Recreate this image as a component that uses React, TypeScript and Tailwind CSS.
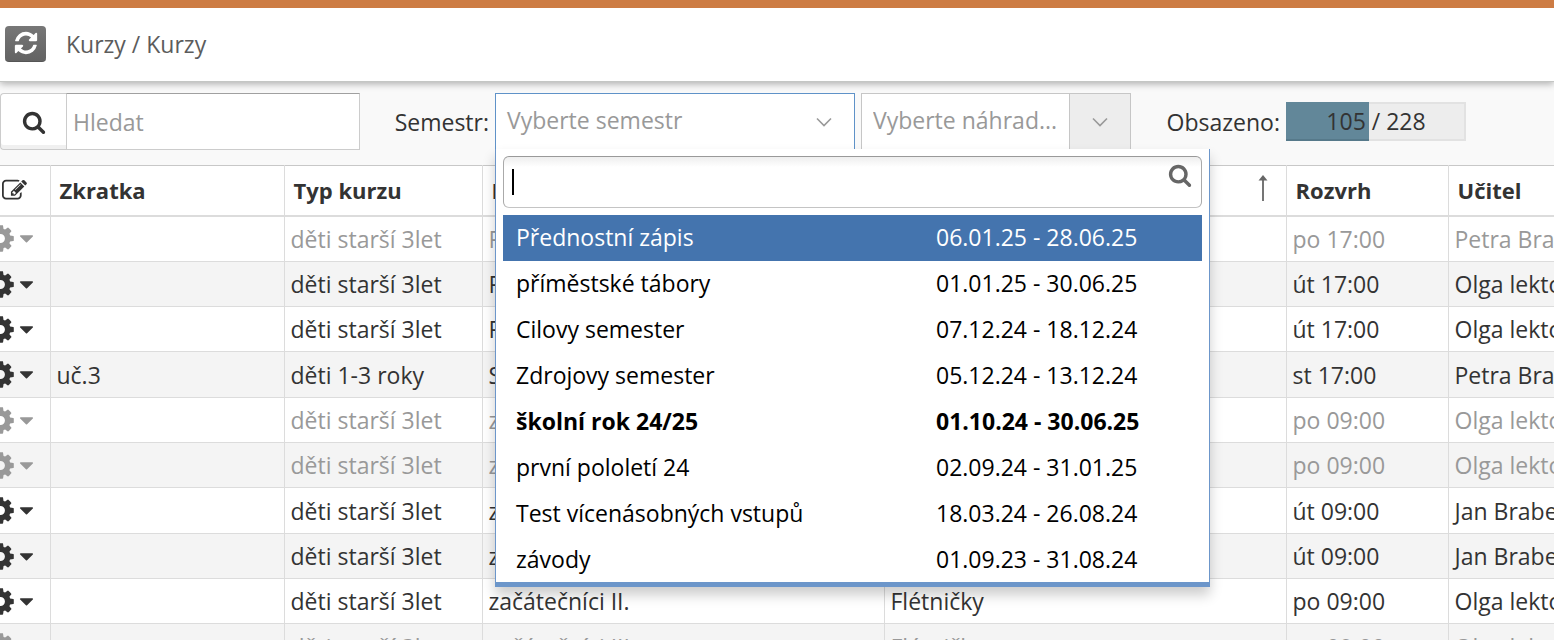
import { useState } from 'react'

type Course = {
    code?: string
    type: string
    name: string
    instrument?: string
    time: string
    teacher: string
    muted?: boolean
}

type Semester = {
    name: string
    range: string
    current?: boolean
}

const semesters: Semester[] = [
    { name: 'Přednostní zápis', range: '06.01.25 - 28.06.25' },
    { name: 'příměstské tábory', range: '01.01.25 - 30.06.25' },
    { name: 'Cilovy semester', range: '07.12.24 - 18.12.24' },
    { name: 'Zdrojovy semester', range: '05.12.24 - 13.12.24' },
    { name: 'školní rok 24/25', range: '01.10.24 - 30.06.25', current: true },
    { name: 'první pololetí 24', range: '02.09.24 - 31.01.25' },
    { name: 'Test vícenásobných vstupů', range: '18.03.24 - 26.08.24' },
    { name: 'závody', range: '01.09.23 - 31.08.24' },
]

const courses: Course[] = [
    { type: 'děti starší 3let', name: 'P', time: 'po 17:00', teacher: 'Petra Brabcová', muted: true },
    { type: 'děti starší 3let', name: 'P', time: 'út 17:00', teacher: 'Olga lektorka' },
    { type: 'děti starší 3let', name: 'P', time: 'út 17:00', teacher: 'Olga lektorka' },
    { code: 'uč.3', type: 'děti 1-3 roky', name: 'S', time: 'st 17:00', teacher: 'Petra Brabcová' },
    { type: 'děti starší 3let', name: 'z', time: 'po 09:00', teacher: 'Olga lektorka', muted: true },
    { type: 'děti starší 3let', name: 'z', time: 'po 09:00', teacher: 'Olga lektorka', muted: true },
    { type: 'děti starší 3let', name: 'z', time: 'út 09:00', teacher: 'Jan Brabec' },
    { type: 'děti starší 3let', name: 'z', time: 'út 09:00', teacher: 'Jan Brabec' },
    { type: 'děti starší 3let', name: 'začátečníci II.', instrument: 'Flétničky', time: 'po 09:00', teacher: 'Olga lektorka' },
    { type: 'děti starší 3let', name: 'začátečníci III.', instrument: 'Flétničky', time: 'po 09:00', teacher: 'Olga lektorka', muted: true },
]

const icons = {
    search: 'M1216 832q0-185-131.5-316.5t-316.5-131.5-316.5 131.5-131.5 316.5 131.5 316.5 316.5 131.5 316.5-131.5 131.5-316.5zm512 832q0 52-38 90t-90 38q-54 0-90-38l-343-342q-179 124-399 124-143 0-273.5-55.5t-225-150-150-225-55.5-273.5 55.5-273.5 150-225 225-150 273.5-55.5 273.5 55.5 225 150 150 225 55.5 273.5q0 220-124 399l343 343q37 37 37 90z',
    refresh: 'M1639 1056q0 5-1 7-64 268-268 434.5t-478 166.5q-146 0-282.5-55t-243.5-157l-129 129q-19 19-45 19t-45-19-19-45v-448q0-26 19-45t45-19h448q26 0 45 19t19 45-19 45l-137 137q71 66 161 102t187 36q134 0 250-65t186-179q11-17 53-117 8-23 30-23h192q13 0 22.5 9.5t9.5 22.5zm25-800v448q0 26-19 45t-45 19h-448q-26 0-45-19t-19-45 19-45l138-138q-148-137-349-137-134 0-250 65t-186 179q-11 17-53 117-8 23-30 23h-199q-13 0-22.5-9.5t-9.5-22.5v-7q65-268 270-434.5t480-166.5q146 0 284 55.5t245 156.5l130-129q19-19 45-19t45 19 19 45z',
    cog: 'M1152 896q0-106-75-181t-181-75-181 75-75 181 75 181 181 75 181-75 75-181zm512-109v222q0 12-8 23t-20 13l-185 28q-19 54-39 91 35 50 107 138 10 12 10 25t-9 23q-27 37-99 108t-94 71q-12 0-26-9l-138-108q-44 23-91 38-16 136-29 186-7 28-36 28h-222q-14 0-24.5-8.5t-11.5-21.5l-28-184q-49-16-90-37l-141 107q-10 9-25 9-14 0-25-11-126-114-165-168-7-10-7-23 0-12 8-23 15-21 51-66.5t54-70.5q-27-50-41-99l-183-27q-13-2-21-12.5t-8-23.5v-222q0-12 8-23t19-13l186-28q14-46 39-92-40-57-107-138-10-12-10-24 0-10 9-23 26-36 98.5-107.5t94.5-71.5q13 0 26 10l138 107q44-23 91-38 16-136 29-186 7-28 36-28h222q14 0 24.5 8.5t11.5 21.5l28 184q49 16 90 37l142-107q9-9 24-9 13 0 25 10 129 119 165 170 7 8 7 22 0 12-8 23-15 21-51 66.5t-54 70.5q26 50 41 98l183 28q13 2 21 12.5t8 23.5z',
    caret: 'M1408 704q0 26-19 45l-448 448q-19 19-45 19t-45-19l-448-448q-19-19-19-45t19-45 45-19h896q26 0 45 19t19 45z',
    edit: 'M888 1184l116-116-152-152-116 116v56h96v96h56zm440-720q-16-16-33 1l-350 350q-17 17-1 33t33-1l350-350q17-17 1-33zm80 594v190q0 119-84.5 203.5t-203.5 84.5h-832q-119 0-203.5-84.5t-84.5-203.5v-832q0-119 84.5-203.5t203.5-84.5h832q63 0 117 25 15 7 18 23 3 17-9 29l-49 49q-14 14-32 8-23-6-45-6h-832q-66 0-113 47t-47 113v832q0 66 47 113t113 47h832q66 0 113-47t47-113v-126q0-13 9-22l64-64q15-15 35-7t20 29zm-96-738l288 288-672 672h-288v-288zm444 132l-92 92-288-288 92-92q28-28 68-28t68 28l152 152q28 28 28 68t-28 68z',
}

const Icon = ({ name, className }: { name: keyof typeof icons, className: string }) => (
    <svg viewBox="0 0 1792 1792" fill="currentColor" aria-hidden="true" className={`shrink-0 ${className}`}>
        <path d={icons[name]} />
    </svg>
)

const Chevron = () => (
    <svg viewBox="0 0 16 10" fill="none" stroke="#999" strokeWidth="1.6" aria-hidden="true" className="w-4 h-[10px] shrink-0">
        <path d="M1 1.5l7 7 7-7" />
    </svg>
)

const SemesterSelect = () => {
    const [open, setOpen] = useState<boolean>(true)
    const [query, setQuery] = useState<string>('')
    const [active, setActive] = useState<number>(0)

    const found = semesters.filter((s) => s.name.toLowerCase().includes(query.toLowerCase()))

    return (
        <div className="relative shrink-0">
            <button
                type="button"
                id="semester"
                aria-haspopup="listbox"
                aria-expanded={open}
                onClick={() => setOpen(!open)}
                className="flex items-center justify-between w-[360px] h-[57px] pl-[11px] pr-[22px] bg-white border border-[#5f92c8] text-[#999]"
            >
                <span className="pb-1">Vyberte semestr</span>
                <Chevron />
            </button>
            {open &&
                <div className="absolute left-0 top-14 z-10 w-[715px] p-[7px] pb-0 bg-white border-x border-b-[5px] border-[#6c96ca] shadow-[0_8px_12px_rgba(0,0,0,0.2)] text-black">
                    <div className="flex items-start h-[52px] px-2 border border-[#aaa] border-t-[#999] border-b-[#c4c4c4] rounded-md bg-linear-to-b from-[#eee] to-white to-20%">
                        {/* thick cursor while nothing is typed yet */}
                        {!query && <span className="w-0.5 h-[26px] mt-3 bg-black" />}
                        <input
                            type="text"
                            autoFocus
                            aria-label="Hledat semestr"
                            value={query}
                            onChange={(e) => setQuery(e.target.value)}
                            className={`grow h-[50px] bg-transparent outline-none ${query ? '' : 'caret-transparent'}`}
                        />
                        <Icon name="search" className="w-6 h-6 mt-[6px] mr-px text-[#666]" />
                    </div>
                    <ul role="listbox" aria-label="Semestr" className="mt-[7px] max-h-[367px] overflow-hidden">
                        {found.map((s, i) => (
                            <li
                                key={s.name}
                                role="option"
                                aria-selected={i === active}
                                onMouseEnter={() => setActive(i)}
                                className={`grid grid-cols-[420px_1fr] items-center h-[46px] pl-[13px] pb-0.5 cursor-pointer ${i === active ? 'bg-[#4474ae] text-white' : ''} ${s.current ? 'font-bold' : ''}`}
                            >
                                <span>{s.name}</span>
                                <span>{s.range}</span>
                            </li>
                        ))}
                    </ul>
                </div>
            }
        </div>
    )
}

const Occupancy = ({ taken, total }: { taken: number, total: number }) => (
    <div className="relative flex items-center justify-center w-[180px] h-[39px] pb-0.5 bg-[#ededed] border-2 border-[#e2e2e2] shrink-0">
        <div className="absolute -left-0.5 -inset-y-0.5 bg-[#628799] border-b-2 border-[#56798a]" style={{ width: `${(taken / total) * 180}px` }} />
        <span className="relative">{taken} / {total}</span>
    </div>
)

const App = () => {
    const head = 'h-[50px] pl-[9px] text-left text-[22px] font-bold border-l border-[#dcdcdc]'
    const cell = 'pl-[6px] border-l border-[#dcdcdc] overflow-hidden'

    return (
        <div className="h-screen overflow-hidden bg-[#f9f9f9] font-['Open_Sans',sans-serif] text-[23px] leading-8 text-[#333]">
            <header className="relative flex items-center gap-5 h-[82px] pl-[5px] pb-0.5 bg-white border-t-8 border-t-[#cd7c44] border-b border-b-[#c4c6c4] shadow-[0_2px_7px_rgba(0,0,0,0.3)]">
                <button type="button" title="Obnovit" aria-label="Obnovit" className="flex items-center justify-center w-[41px] h-9 rounded-sm bg-linear-to-b from-[#777] to-[#636363] border-b border-[#555] text-white">
                    <Icon name="refresh" className="w-[26px] h-[26px]" />
                </button>
                <h1 className="text-[#5c5c5c]">Kurzy / Kurzy</h1>
            </header>

            <div className="flex items-center h-[83px] pb-1 whitespace-nowrap">
                <div className="flex h-[57px] shrink-0">
                    <button type="button" title="Hledat" aria-label="Hledat" className="flex items-center justify-center w-[66px] border border-r-0 border-[#ccc] rounded-l-sm bg-white shadow-[inset_0_-4px_0_#f0f0f0]">
                        <Icon name="search" className="w-6 h-6" />
                    </button>
                    <input type="text" placeholder="Hledat" aria-label="Hledat kurz" className="w-[294px] px-[6px] bg-white border border-[#ccc] border-t-[#a0a0a0] outline-none placeholder:text-[#999]" />
                </div>
                <label htmlFor="semester" className="w-[135px] pr-[6px] text-right shrink-0">Semestr:</label>
                <SemesterSelect />
                <div className="relative w-[270px] ml-[6px] shrink-0">
                    <select aria-label="Náhrady" className="appearance-none w-full h-[57px] pl-[11px] pb-1 bg-white border border-[#c6c6c6] text-[#999] outline-none">
                        <option>Vyberte náhrad...</option>
                    </select>
                    <div className="absolute right-px inset-y-px flex items-center justify-center w-[61px] bg-[#ededed] border-l border-[#c6c6c6] pointer-events-none">
                        <Chevron />
                    </div>
                </div>
                <span className="w-[155px] pr-[6px] text-right shrink-0">Obsazeno:</span>
                <Occupancy taken={105} total={228} />
            </div>

            <table className="w-full table-fixed border-collapse bg-white whitespace-nowrap">
                <colgroup>
                    <col className="w-[50px]" />
                    <col className="w-[234px]" />
                    <col className="w-[198px]" />
                    <col className="w-[402px]" />
                    <col className="w-[402px]" />
                    <col className="w-[162px]" />
                    <col />
                </colgroup>
                <thead>
                    <tr className="border-t border-t-[#c8c8c8] border-b-2 border-b-[#dcdcdc]">
                        <th aria-label="Upravit" className="pl-0.5"><Icon name="edit" className="w-[25px] h-[25px]" /></th>
                        <th className={head}>Zkratka</th>
                        <th className={head}>Typ kurzu</th>
                        <th className={head}>Název</th>
                        <th className={head}>
                            <svg viewBox="0 0 10 26" aria-hidden="true" className="w-[10px] h-[26px] ml-auto mr-[18px] mb-1">
                                <path d="M5 0l4.500 5.500h-9z" fill="#666" />
                                <path d="M5 4v22" stroke="#666" strokeWidth="1.800" />
                            </svg>
                        </th>
                        <th className={head}>Rozvrh</th>
                        <th className={head}>Učitel</th>
                    </tr>
                </thead>
                <tbody>
                    {courses.map((c, i) => (
                        <tr key={i} className={`h-[45px] nth-[3n+1]:h-[46px] even:bg-[#f4f4f4] border-b border-[#dcdcdc] ${c.muted ? 'text-[#999]' : ''}`}>
                            <td className="overflow-hidden">
                                <button type="button" aria-label="Akce" className="flex items-center justify-end w-[38px]">
                                    <Icon name="cog" className="w-[31px] h-[31px] -mr-px" />
                                    <Icon name="caret" className="w-[23px] h-[23px]" />
                                </button>
                            </td>
                            <td className={cell}>{c.code}</td>
                            <td className={cell}>{c.type}</td>
                            <td className={cell}>{c.name}</td>
                            <td className={cell}>{c.instrument}</td>
                            <td className={cell}>{c.time}</td>
                            <td className={cell}>{c.teacher}</td>
                        </tr>
                    ))}
                </tbody>
            </table>
        </div>
    )
}

export default App
